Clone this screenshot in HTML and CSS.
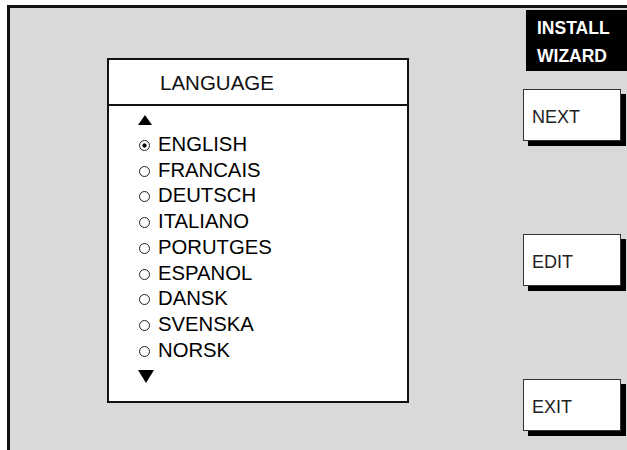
FILE: index.html
```html
<!DOCTYPE html>
<html>
    <head>
        <meta charset="utf-8">
        <meta name="viewport" content="width=device-width, initial-scale=1">
        <title>Install Wizard - Language</title>
        <link rel="stylesheet" href="styles.css">
    </head>
    <body>
        <div class="frame">
            <div class="lang-box">
                <div class="lang-title">LANGUAGE</div>
                <div class="lang-list">
                    <div class="arrow-up-row"><span class="tri-up"></span></div>
                    <ul class="lang-items">
                        <li><span class="radio checked"></span>ENGLISH</li>
                        <li><span class="radio"></span>FRANCAIS</li>
                        <li><span class="radio"></span>DEUTSCH</li>
                        <li><span class="radio"></span>ITALIANO</li>
                        <li><span class="radio"></span>PORUTGES</li>
                        <li><span class="radio"></span>ESPANOL</li>
                        <li><span class="radio"></span>DANSK</li>
                        <li><span class="radio"></span>SVENSKA</li>
                        <li><span class="radio"></span>NORSK</li>
                    </ul>
                    <div class="arrow-down-row"><span class="tri-down"></span></div>
                </div>
            </div>
            <div class="side">
                <div class="wizard">INSTALL<br>WIZARD</div>
                <div class="soft-key first">NEXT</div>
                <div class="soft-key">EDIT</div>
                <div class="soft-key">EXIT</div>
            </div>
        </div>
    </body>
</html>
```
FILE: styles.css
```css
html, body{
    margin: 0;
    padding: 0;
    background-color: #fff;
    overflow: hidden;
}
body{
    font-family: "Liberation Sans", Arial, sans-serif;
    color: #111;
}
.frame{
    margin: 5px 0 0 7px;
    height: 445px;
    box-sizing: border-box;
    border-top: 3px solid #111;
    border-left: 3px solid #111;
    background-color: #d9d9d9;
    display: flex;
    align-items: flex-start;
}
.lang-box{
    margin: 50px 0 0 97px;
    width: 302px;
    height: 345px;
    box-sizing: border-box;
    border: 2px solid #111;
    background-color: #fff;
}
.lang-title{
    height: 46px;
    box-sizing: border-box;
    border-bottom: 2px solid #111;
    padding: 13px 0 0 51px;
    font-size: 20.5px;
    line-height: 20px;
}
.lang-list{
    padding-left: 30px;
}
.arrow-up-row{
    height: 25px;
    box-sizing: border-box;
    padding-top: 9px;
}
.tri-up{
    display: block;
    width: 0;
    height: 0;
    margin-left: -1px;
    border-left: 7.5px solid transparent;
    border-right: 7.5px solid transparent;
    border-bottom: 10px solid #000;
}
.lang-items{
    list-style: none;
    margin: 0;
    padding: 1px 0 0 0;
    font-size: 20.3px;
    line-height: 25.7px;
    color: #000;
}
.radio{
    display: inline-block;
    width: 11px;
    height: 11px;
    box-sizing: border-box;
    border: 1px solid #222;
    border-radius: 50%;
    margin-right: 8px;
}
.radio.checked{
    background: radial-gradient(circle, #000 0, #000 1.8px, transparent 2.4px);
}
.arrow-down-row{
    padding-top: 6.5px;
}
.tri-down{
    display: block;
    width: 0;
    height: 0;
    margin-left: -1px;
    border-left: 8.5px solid transparent;
    border-right: 8.5px solid transparent;
    border-top: 13px solid #000;
}
.side{
    margin-left: auto;
    margin-top: 2px;
    width: 104px;
    display: flex;
    flex-direction: column;
}
.wizard{
    margin-left: 3px;
    height: 61px;
    box-sizing: border-box;
    padding: 4px 0 0 11px;
    background-color: #000;
    color: #fff;
    font-weight: bold;
    font-size: 17.5px;
    line-height: 28px;
}
.soft-key{
    width: 98px;
    height: 52px;
    box-sizing: border-box;
    margin-top: 93px;
    padding: 17px 0 0 8px;
    border: 1px solid #333;
    background-color: #fff;
    box-shadow: 5px 5px 0 #000;
    color: #222;
    font-size: 18px;
    line-height: 20px;
}
.soft-key.first{
    margin-top: 18px;
}
```
